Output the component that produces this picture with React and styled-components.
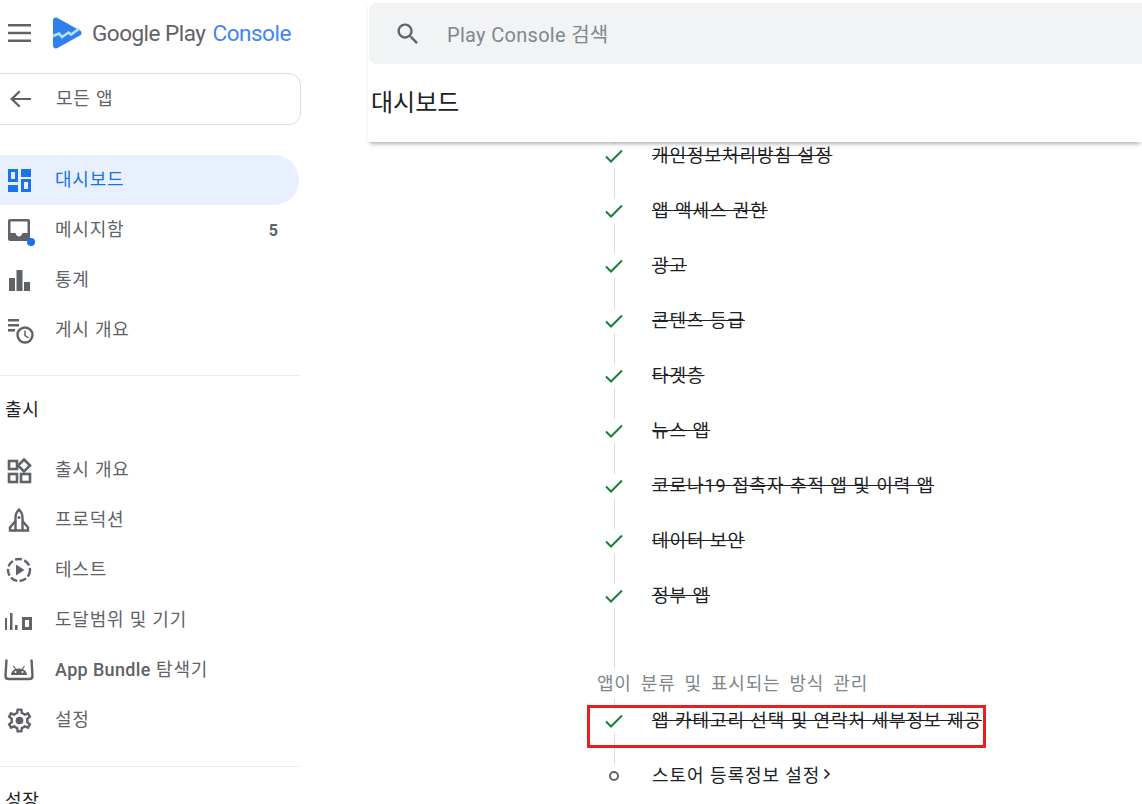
import React from 'react';
import styled, { createGlobalStyle } from 'styled-components';

const Global = createGlobalStyle`
    html, body { margin: 0; padding: 0; background: #fff; height: 100%; overflow: hidden; }
    body { font-family: "Roboto", "Noto Sans CJK KR", sans-serif; }
    * { box-sizing: border-box; }
`;

const KR = `"Roboto", "Noto Sans CJK KR", sans-serif`;

const Page = styled.div`
    width: 1142px;
    height: 804px;
    overflow: hidden;
    display: flex;
    background: #fff;
`;

const Sidebar = styled.aside`
    width: 299px;
    flex: none;
    display: flex;
    flex-direction: column;
    & > * { flex-shrink: 0; }
`;

const Brand = styled.div`
    height: 66px;
    display: flex;
    align-items: center;
    padding-left: 7px;
    gap: 21px;
`;

const Wordmark = styled.div`
    font-family: "Roboto", sans-serif;
    font-size: 22.5px;
    letter-spacing: -0.5px;
    color: #5f6368;
    margin-left: -11px;
    white-space: nowrap;
    span { color: #4285f4; margin-left: 2px; }
`;

const BackCard = styled.div`
    margin: 7px 0 0 -12px;
    width: 313px;
    height: 52px;
    border: 1px solid #dadce0;
    border-radius: 12px;
    display: flex;
    align-items: center;
    padding-left: 19px;
    gap: 24px;
    font-size: 18px;
    letter-spacing: 0.8px;
    color: #5f6368;
    font-family: ${KR};
`;

const NavGroup = styled.nav`
    display: flex;
    flex-direction: column;
    margin-top: ${p => p.$top || 0}px;
`;

const NavRow = styled.div`
    height: 50px;
    display: flex;
    align-items: center;
    padding: 0 21px 0 7px;
    gap: 24px;
    font-family: ${KR};
    font-size: 18px;
    letter-spacing: 0.8px;
    color: ${p => (p.$active ? '#1a73e8' : '#5f6368')};
    background: ${p => (p.$active ? '#e8f0fe' : 'transparent')};
    border-radius: ${p => (p.$active ? '0 25px 25px 0' : '0')};
    svg { flex: none; overflow: visible; }
`;

const NavLabel = styled.span`
    padding-bottom: 5px;
`;

const Latin = styled.span`
    font-size: 18px;
    letter-spacing: 0.35px;
    font-weight: 500;
`;

const Count = styled.span`
    margin-left: auto;
    font-weight: 700;
    font-size: 16px;
    letter-spacing: 0;
    font-family: "Roboto", sans-serif;
`;

const Divider = styled.hr`
    margin: ${p => p.$top}px 0 0;
    border: 0;
    border-top: 1px solid #e8eaed;
`;

const SectionTitle = styled.div`
    font-family: ${KR};
    font-size: 18px;
    letter-spacing: 0.8px;
    color: #202124;
    padding: 0 0 5px 5px;
    height: 69px;
    display: flex;
    align-items: center;
`;

const Main = styled.main`
    flex: 1;
    min-width: 0;
    margin-left: 69px;
    display: flex;
    flex-direction: column;
`;

const Header = styled.header`
    position: relative;
    z-index: 2;
    height: 142px;
    flex: none;
    padding-top: 3px;
    background: #fff;
    box-shadow: 0 4px 4px -2px rgba(60, 64, 67, 0.4);
`;

const SearchBar = styled.div`
    margin-left: 1px;
    width: 800px;
    height: 61px;
    background: #f1f3f4;
    border-radius: 8px;
    display: flex;
    align-items: center;
    padding: 0 0 0 25px;
    gap: 25px;
    font-family: ${KR};
    font-size: 20px;
    letter-spacing: 0.3px;
    color: #80868b;
`;

const PageTitle = styled.h1`
    margin: 0;
    height: 72px;
    padding-left: 3px;
    display: flex;
    align-items: center;
    font-family: ${KR};
    font-weight: 400;
    font-size: 24px;
    color: #202124;
`;

const Checklist = styled.div`
    margin: -14px 0 0 229px;
    display: flex;
    flex-direction: column;
`;

const Step = styled.div`
    position: relative;
    height: 55px;
    display: flex;
    align-items: center;
    gap: 21px;
`;

const Rail = styled.div`
    width: 34px;
    height: 100%;
    flex: none;
    display: flex;
    flex-direction: column;
    align-items: center;
`;

const RailLine = styled.div`
    flex: 1;
    width: 1px;
    background: ${p => (p.$hidden ? 'transparent' : '#dadce0')};
`;

const Marker = styled.div`
    width: 24px;
    height: 24px;
    flex: none;
    display: flex;
    align-items: center;
    justify-content: center;
`;

const StepLabel = styled.div`
    font-family: ${KR};
    font-size: 18px;
    letter-spacing: 0.94px;
    color: #202124;
    white-space: nowrap;
    padding-bottom: 3px;
    display: flex;
    align-items: center;
    text-decoration: ${p => (p.$done ? 'line-through' : 'none')};
`;

const RailSpacer = styled.div`
    width: 34px;
    height: 45px;
    display: flex;
    flex-direction: column;
    align-items: center;
`;

const GroupHeading = styled.div`
    position: relative;
    z-index: 1;
    height: 30px;
    margin-bottom: -5px;
    padding-bottom: 2px;
    background: #fff;
    font-family: ${KR};
    font-size: 18px;
    letter-spacing: 0.8px;
    word-spacing: 3.8px;
    color: #80868b;
    display: flex;
    align-items: center;
    white-space: nowrap;
`;

const Highlight = styled.div`
    position: absolute;
    left: -10px;
    top: 12px;
    width: 399px;
    height: 43px;
    border: 3px solid #ed1c24;
    z-index: 1;
`;

const Ring = styled.div`
    width: 10px;
    height: 10px;
    border: 2px solid #5f6368;
    border-radius: 50%;
`;

const GearSvg = styled.svg`
    margin: 0 -2.5px;
`;

const ChevronSvg = styled.svg`
    margin-left: 3px;
`;

const Svg = ({ children, size = 24, fill = '#5f6368', box = '0 0 24 24' }) => (
    <svg width={size} height={size} viewBox={box} fill={fill}>{children}</svg>
);

const Line = { fill: 'none', stroke: '#5f6368', strokeWidth: 2 };

const MenuIcon = () => (
    <Svg><path d="M1 3h23v2.600H1zM1 10.700h23v2.600H1zM1 18.400h23V21H1z" /></Svg>
);

const Logo = () => (
    <svg width="30" height="32" viewBox="0 0 30 32">
        <path d="M1 3.500C1 1 3.500-.2 5.500 1l22.500 12.500c2 1.200 2 3.800 0 5L5.500 31C3.500 32.200 1 31 1 28.500z" fill="#2f80ed" />
        <path d="M1 19l6-2.500 3 3.500 6.500-4.500 2.500 2 8.500-6" fill="none" stroke="#b5e3fa" strokeWidth="2.600" />
    </svg>
);

const BackArrow = () => (
    <Svg><path d="M23 11H6.500l6-6-1.500-1.500L2 12l9 8.500 1.500-1.500-6-6H23z" /></Svg>
);

const DashboardIcon = () => (
    <svg width="24" height="24" viewBox="0 0 24 24" fill="#1a73e8">
        <path fillRule="evenodd" d="M1 1h10v13H1zM4 4v7h4V4z" />
        <path d="M14 1h10v8H14zM1 17h10v7H1z" />
        <path fillRule="evenodd" d="M14 11h10v13H14zM17 14v7h4v-7z" />
    </svg>
);

const InboxIcon = () => (
    <Svg>
        <path fillRule="evenodd" d="M3 1h18c1.200 0 2 .8 2 2v18c0 1.200-.8 2-2 2H3c-1.200 0-2-.8-2-2V3c0-1.200.8-2 2-2zM3.500 3.500v11.500h5c.5 2 2 3.500 3.500 3.500s3-1.500 3.500-3.500h5V3.500z" />
        <circle cx="24" cy="24" r="4" fill="#1a73e8" />
    </Svg>
);

const BarsIcon = () => (
    <Svg><path d="M2 10h6v13H2zM9.500 2h6v21h-6zM17 14h6v9h-6z" /></Svg>
);

const PublishIcon = () => (
    <Svg>
        <path d="M1 1h11v2.400H1zM1 6h11v2.400H1zM1 11h7v2.400H1z" />
        <circle cx="18" cy="17" r="7.500" {...Line} strokeWidth="2.400" />
        <path d="M18 12.500v5l3.500 2.500" {...Line} strokeWidth="1.500" />
    </Svg>
);

const ReleaseIcon = () => (
    <Svg>
        <g {...Line} strokeWidth="2.600">
            <rect x="2" y="3" width="8" height="8" />
            <path d="M17 1.500l6 6-6 6-6-6z" />
            <rect x="2" y="16" width="8" height="8" />
            <rect x="14" y="16" width="9" height="8" />
        </g>
    </Svg>
);

const RocketIcon = () => (
    <Svg>
        <g {...Line} strokeWidth="2.400">
            <path d="M12 1.500c-2.500 2.500-3.500 5-3.500 8v13h7v-13c0-3-1-5.500-3.500-8z" />
            <path d="M8.500 13L3 19.500v3h5.500M15.500 13l5.500 6.500v3h-5.500" />
        </g>
        <circle cx="12" cy="9.500" r="1.500" />
    </Svg>
);

const TestIcon = () => (
    <Svg>
        <circle cx="12" cy="12" r="11" {...Line} strokeWidth="2.400" strokeDasharray="7 2.500" />
        <path d="M9 6.500l8.500 5.500L9 17.500z" />
    </Svg>
);

const ReachIcon = () => (
    <Svg>
        <path d="M-2 10H0v12h-2zM3 5h2.500v17H3zM8 17h2.500v5H8z" />
        <path fillRule="evenodd" d="M15 9h10v13H15zM18 12v7h4v-7z" />
    </Svg>
);

const BundleIcon = () => (
    <Svg>
        <path d="M-.5 1.500L-1.500 18c0 2.500 1 3 3 3h21c2 0 3-.5 3-3L24.500 1.500" {...Line} strokeWidth="2.400" />
        <path d="M4 17c.3-3.500 2.500-6.500 8-6.500s7.700 3 8 6.500z" />
        <path d="M6.500 8l2.500 3.500M17.500 8L15 11.500" {...Line} strokeWidth="1.200" />
        <circle cx="8.500" cy="14" r="1" fill="#fff" />
        <circle cx="15.500" cy="14" r="1" fill="#fff" />
    </Svg>
);

const SettingsIcon = () => (
    <GearSvg width="29" height="29" viewBox="0 0 24 24" fill="#5f6368">
        <path d="M19.43 12.98c.04-.32.07-.64.07-.98 0-.34-.03-.66-.07-.98l2.11-1.65c.19-.15.24-.42.12-.64l-2-3.46c-.09-.16-.26-.25-.44-.25-.06 0-.12.01-.17.03l-2.49 1c-.52-.4-1.08-.73-1.69-.98l-.38-2.65C14.46 2.18 14.25 2 14 2h-4c-.25 0-.46.18-.49.42l-.38 2.65c-.61.25-1.17.59-1.69.98l-2.49-1c-.06-.02-.12-.03-.18-.03-.17 0-.34.09-.43.25l-2 3.46c-.13.22-.07.49.12.64l2.11 1.65c-.04.32-.07.65-.07.98 0 .33.03.66.07.98l-2.11 1.65c-.19.15-.24.42-.12.64l2 3.46c.09.16.26.25.44.25.06 0 .12-.01.17-.03l2.49-1c.52.4 1.08.73 1.69.98l.38 2.65c.03.24.24.42.49.42h4c.25 0 .46-.18.49-.42l.38-2.65c.61-.25 1.17-.59 1.69-.98l2.49 1c.06.02.12.03.18.03.17 0 .34-.09.43-.25l2-3.46c.12-.22.07-.49-.12-.64l-2.11-1.65zm-1.98-1.71c.04.31.05.52.05.73 0 .21-.02.43-.05.73l-.14 1.13.89.7 1.08.84-.7 1.21-1.27-.51-1.04-.42-.9.68c-.43.32-.84.56-1.25.73l-1.06.43-.16 1.13-.2 1.35h-1.4l-.19-1.35-.16-1.13-1.06-.43c-.43-.18-.83-.41-1.23-.71l-.91-.7-1.06.43-1.27.51-.7-1.21 1.08-.84.89-.7-.14-1.13c-.03-.31-.05-.54-.05-.74s.02-.43.05-.73l.14-1.13-.89-.7-1.08-.84.7-1.21 1.27.51 1.04.42.9-.68c.43-.32.84-.56 1.25-.73l1.06-.43.16-1.13.2-1.35h1.39l.19 1.35.16 1.13 1.06.43c.43.18.83.41 1.23.71l.91.7 1.06-.43 1.27-.51.7 1.21-1.07.85-.89.7.14 1.13z" />
        <circle cx="12" cy="12" r="3.200" />
    </GearSvg>
);

const SearchIcon = () => (
    <svg width="28" height="28" viewBox="0 0 24 24" fill="#5f6368">
        <path d="M15.5 14h-.79l-.28-.27C15.41 12.59 16 11.11 16 9.500 16 5.910 13.090 3 9.500 3S3 5.910 3 9.500 5.910 16 9.500 16c1.610 0 3.090-.59 4.230-1.570l.27.28v.79l5 4.990L20.490 19l-4.990-5zm-6 0C7.010 14 5 11.990 5 9.500S7.010 5 9.500 5 14 7.010 14 9.500 11.990 14 9.500 14z" />
    </svg>
);

const CheckIcon = () => (
    <svg width="18" height="14" viewBox="0 0 18 14" fill="none">
        <path d="M1 7.500l5 5L17 1.500" stroke="#188038" strokeWidth="2" />
    </svg>
);

const Chevron = () => (
    <ChevronSvg width="8" height="12" viewBox="0 0 8 12" fill="none">
        <path d="M1.500 1.500L6 6l-4.500 4.500" stroke="#202124" strokeWidth="1.600" />
    </ChevronSvg>
);

const topNav = [
    { icon: <DashboardIcon />, label: '대시보드', active: true },
    { icon: <InboxIcon />, label: '메시지함', count: 5 },
    { icon: <BarsIcon />, label: '통계' },
    { icon: <PublishIcon />, label: '게시 개요' },
];

const releaseNav = [
    { icon: <ReleaseIcon />, label: '출시 개요' },
    { icon: <RocketIcon />, label: '프로덕션' },
    { icon: <TestIcon />, label: '테스트' },
    { icon: <ReachIcon />, label: '도달범위 및 기기' },
    { icon: <BundleIcon />, label: <><Latin>App Bundle</Latin> 탐색기</> },
    { icon: <SettingsIcon />, label: '설정' },
];

const steps = [
    '개인정보처리방침 설정',
    '앱 액세스 권한',
    '광고',
    '콘텐츠 등급',
    '타겟층',
    '뉴스 앱',
    '코로나19 접촉자 추적 앱 및 이력 앱',
    '데이터 보안',
    '정부 앱',
];

const NavItem = ({ item }) => (
    <NavRow $active={item.active}>
        {item.icon}
        <NavLabel>{item.label}</NavLabel>
        {item.count && <Count>{item.count}</Count>}
    </NavRow>
);

const StepRow = ({ done = true, children, marker, last }) => (
    <Step>
        <Rail>
            <RailLine />
            <Marker>{marker || <CheckIcon />}</Marker>
            <RailLine $hidden={last} />
        </Rail>
        <StepLabel $done={done}>{children}</StepLabel>
    </Step>
);

export default function App() {
    return (
        <Page>
            <Global />
            <Sidebar>
                <Brand>
                    <MenuIcon />
                    <Logo />
                    <Wordmark>Google Play <span>Console</span></Wordmark>
                </Brand>
                <BackCard>
                    <BackArrow />
                    <NavLabel>모든 앱</NavLabel>
                </BackCard>
                <NavGroup $top={30}>
                    {topNav.map((item, i) => <NavItem key={i} item={item} />)}
                </NavGroup>
                <Divider $top={20} />
                <SectionTitle>출시</SectionTitle>
                <NavGroup>
                    {releaseNav.map((item, i) => <NavItem key={i} item={item} />)}
                </NavGroup>
                <Divider $top={21} />
                <SectionTitle>성장</SectionTitle>
            </Sidebar>
            <Main>
                <Header>
                    <SearchBar>
                        <SearchIcon />
                        <span>Play Console 검색</span>
                    </SearchBar>
                    <PageTitle>대시보드</PageTitle>
                </Header>
                <Checklist>
                    {steps.map(s => <StepRow key={s}>{s}</StepRow>)}
                    <RailSpacer><RailLine /></RailSpacer>
                    <GroupHeading>앱이 분류 및 표시되는 방식 관리</GroupHeading>
                    <Step>
                        <Highlight />
                        <Rail>
                            <RailLine />
                            <Marker><CheckIcon /></Marker>
                            <RailLine />
                        </Rail>
                        <StepLabel $done>앱 카테고리 선택 및 연락처 세부정보 제공</StepLabel>
                    </Step>
                    <StepRow done={false} last marker={<Ring />}>스토어 등록정보 설정<Chevron /></StepRow>
                </Checklist>
            </Main>
        </Page>
    );
}
